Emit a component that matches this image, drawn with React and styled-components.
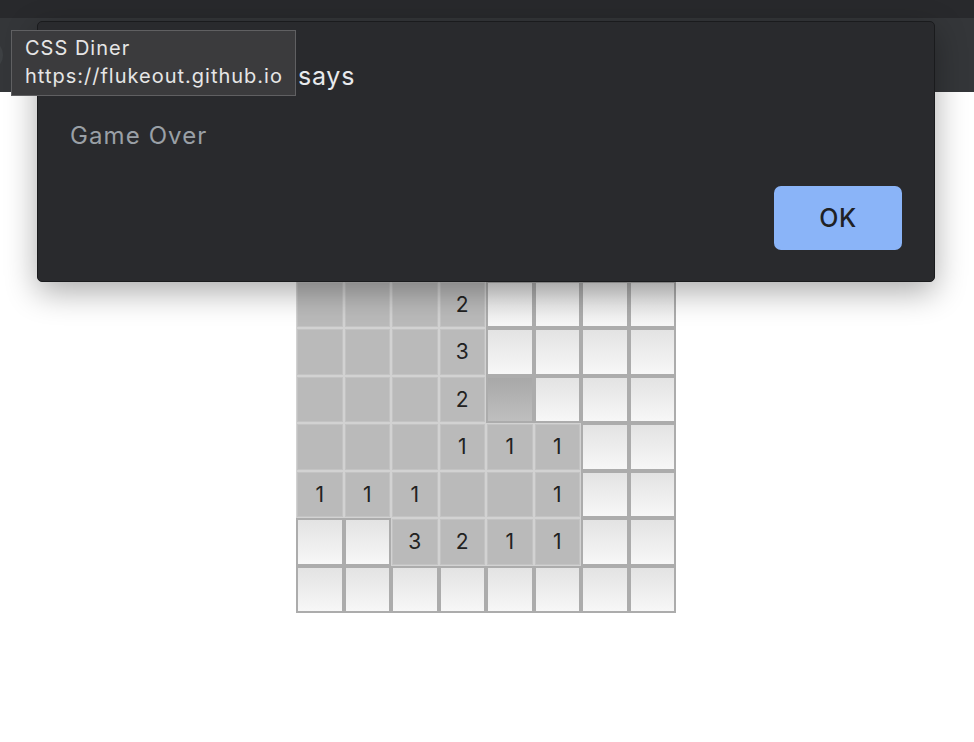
import React from 'react'
import styled, { createGlobalStyle, css } from "styled-components";

const GlobalStyle = createGlobalStyle`
  body {
    margin: 0;
    background: #ffffff;
    font-family: Inter, "Liberation Sans", sans-serif;
  }
`;

const Screen = styled.div`
  position: relative;
  width: 974px;
  height: 742px;
  overflow: hidden;
  background: #ffffff;
`;

const TabStrip = styled.div`
  height: 18px;
  background: #28292c;
`;

const Toolbar = styled.div`
  height: 74px;
  background: #343639;
  display: flex;
  align-items: center;
`;

const RoundButton = styled.div`
  width: 32px;
  height: 32px;
  margin-left: -29px;
  border-radius: 50%;
  background: #3d4043;
`;

const Page = styled.div`
  display: flex;
  justify-content: center;
  padding-top: 141px;
  padding-right: 2px;
`;

const Board = styled.div`
  display: grid;
  grid-template-columns: repeat(8, 47.5px);
  grid-auto-rows: 47.5px;
`;

const Cell = styled.div`
  box-sizing: border-box;
  display: flex;
  align-items: center;
  justify-content: center;
  font-size: 21px;
  color: #222;

  ${({ $kind }) => $kind === "hidden" && css`
    border: 2px solid #acacac;
    background: linear-gradient(#e3e3e3, #f7f7f7);
  `}
  ${({ $kind }) => $kind === "pressed" && css`
    border: 2px solid #acacac;
    background: linear-gradient(#a8a8a8, #bfbfbf);
  `}
  ${({ $kind }) => $kind === "open" && css`
    border: 1px solid #d2d2d2;
    box-shadow: inset 0 0 0 1px #c3c3c3;
    background: #bababa;
  `}
`;

const Dialog = styled.div`
  position: absolute;
  top: 21px;
  left: 37px;
  width: 898px;
  height: 261px;
  box-sizing: border-box;
  display: flex;
  flex-direction: column;
  padding: 39px 32px 31px 32px;
  background: #292a2d;
  border: 1px solid #1a1b1d;
  border-radius: 5px;
  box-shadow: 0 10px 32px rgba(0, 0, 0, 0.33);
`;

const Title = styled.div`
  font-size: 25px;
  line-height: 30px;
  color: #e8eaed;
  letter-spacing: 0.8px;
`;

const Message = styled.div`
  margin-top: 30px;
  font-size: 24px;
  line-height: 30px;
  color: #9aa0a6;
  letter-spacing: 1.1px;
`;

const OkButton = styled.button`
  margin-top: auto;
  align-self: flex-end;
  width: 128px;
  height: 64px;
  border: none;
  border-radius: 7px;
  background: #8ab4f8;
  color: #202124;
  font-family: Inter, "Liberation Sans", sans-serif;
  font-size: 25px;
  font-weight: 500;
  letter-spacing: 0.5px;
`;

const Tooltip = styled.div`
  position: absolute;
  top: 30px;
  left: 11px;
  box-sizing: border-box;
  width: 285px;
  height: 66px;
  padding: 4px 0 0 13px;
  background: #3b3b3d;
  border: 1px solid #606062;
  font-size: 20px;
  line-height: 27.5px;
  color: #e6e6e6;
  letter-spacing: 1px;
  white-space: nowrap;
`;

const board = [
  ["", "", "", "1", "u", "u", "u", "u"],
  ["", "", "", "2", "u", "u", "u", "u"],
  ["", "", "", "3", "u", "u", "u", "u"],
  ["", "", "", "2", "p", "u", "u", "u"],
  ["", "", "", "1", "1", "1", "u", "u"],
  ["1", "1", "1", "", "", "1", "u", "u"],
  ["u", "u", "3", "2", "1", "1", "u", "u"],
  ["u", "u", "u", "u", "u", "u", "u", "u"],
];

function kindOf(v) {
  if (v === "u") return "hidden";
  if (v === "p") return "pressed";
  return "open";
}

export default function App() {
  return (
    <Screen>
      <GlobalStyle />
      <TabStrip />
      <Toolbar>
        <RoundButton />
      </Toolbar>
      <Page>
        <Board>
          {board.flatMap((row, r) =>
            row.map((v, c) => (
              <Cell key={r + "-" + c} $kind={kindOf(v)}>
                {v !== "u" && v !== "p" ? v : null}
              </Cell>
            ))
          )}
        </Board>
      </Page>
      <Dialog>
        <Title>flukeout.github.io says</Title>
        <Message>Game Over</Message>
        <OkButton>OK</OkButton>
      </Dialog>
      <Tooltip>
        CSS Diner
        <br />
        https://flukeout.github.io
      </Tooltip>
    </Screen>
  )
}
